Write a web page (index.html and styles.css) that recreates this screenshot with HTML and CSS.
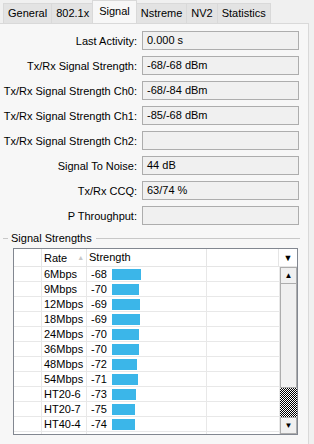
FILE: index.html
```html
<!DOCTYPE html>
<html lang="en">
<head>
    <meta charset="UTF-8">
    <title>Interface - Signal</title>
    <link rel="stylesheet" href="styles.css">
</head>
<body>
    <div class="tabs">
        <div class="tab">General</div>
        <div class="tab">802.1x</div>
        <div class="tab active">Signal</div>
        <div class="tab">Nstreme</div>
        <div class="tab">NV2</div>
        <div class="tab">Statistics</div>
    </div>
    <div class="panel">
        <div class="form">
            <label>Last Activity:</label><div class="field">0.000 s</div>
            <label>Tx/Rx Signal Strength:</label><div class="field">-68/-68 dBm</div>
            <label>Tx/Rx Signal Strength Ch0:</label><div class="field">-68/-84 dBm</div>
            <label>Tx/Rx Signal Strength Ch1:</label><div class="field">-85/-68 dBm</div>
            <label>Tx/Rx Signal Strength Ch2:</label><div class="field"></div>
            <label>Signal To Noise:</label><div class="field">44 dB</div>
            <label>Tx/Rx CCQ:</label><div class="field">63/74 %</div>
            <label>P Throughput:</label><div class="field"></div>
        </div>
        <div class="group"><span>Signal Strengths</span></div>
        <div class="list">
            <div class="list-head">
                <div class="col c0"></div>
                <div class="col c1">Rate <span class="sort">&#9650;</span></div>
                <div class="col c2">Strength</div>
                <div class="col c3"></div>
                <div class="col c4"><span class="drop">&#9660;</span></div>
            </div>
            <div class="list-body">
                <div class="rows">
                    <div class="row"><div class="c0"></div><div class="c1">6Mbps</div><div class="c2"><span class="val">-68</span><span class="bar" style="width:29px"></span></div></div>
                    <div class="row"><div class="c0"></div><div class="c1">9Mbps</div><div class="c2"><span class="val">-70</span><span class="bar" style="width:27px"></span></div></div>
                    <div class="row"><div class="c0"></div><div class="c1">12Mbps</div><div class="c2"><span class="val">-69</span><span class="bar" style="width:28px"></span></div></div>
                    <div class="row"><div class="c0"></div><div class="c1">18Mbps</div><div class="c2"><span class="val">-69</span><span class="bar" style="width:28px"></span></div></div>
                    <div class="row"><div class="c0"></div><div class="c1">24Mbps</div><div class="c2"><span class="val">-70</span><span class="bar" style="width:27px"></span></div></div>
                    <div class="row"><div class="c0"></div><div class="c1">36Mbps</div><div class="c2"><span class="val">-70</span><span class="bar" style="width:27px"></span></div></div>
                    <div class="row"><div class="c0"></div><div class="c1">48Mbps</div><div class="c2"><span class="val">-72</span><span class="bar" style="width:25px"></span></div></div>
                    <div class="row"><div class="c0"></div><div class="c1">54Mbps</div><div class="c2"><span class="val">-71</span><span class="bar" style="width:26px"></span></div></div>
                    <div class="row"><div class="c0"></div><div class="c1">HT20-6</div><div class="c2"><span class="val">-73</span><span class="bar" style="width:24px"></span></div></div>
                    <div class="row"><div class="c0"></div><div class="c1">HT20-7</div><div class="c2"><span class="val">-75</span><span class="bar" style="width:23px"></span></div></div>
                    <div class="row"><div class="c0"></div><div class="c1">HT40-4</div><div class="c2"><span class="val">-74</span><span class="bar" style="width:23px"></span></div></div>
                    <div class="row"><div class="c0"></div><div class="c1">HT40-5</div><div class="c2"><span class="val">-73</span><span class="bar" style="width:24px"></span></div></div>
                </div>
                <div class="scrollbar">
                    <div class="sb-btn">&#9650;</div>
                    <div class="sb-thumb"></div>
                    <div class="sb-track"></div>
                    <div class="sb-btn">&#9660;</div>
                </div>
            </div>
        </div>
    </div>
</body>
</html>
```

FILE: styles.css
```css
body { margin: 0; background: #f0f0f0; font-family: "Liberation Sans", Arial, sans-serif; font-size: 11px; color: #000; width: 314px; height: 444px; overflow: hidden; }
.tabs { display: flex; height: 23px; padding-left: 3px; align-items: flex-end; }
.tab { height: 19px; line-height: 19px; padding: 0 4px; background: #e3e3e3; border: 1px solid #d9d9d9; border-bottom: none; margin-right: -1px; }
.tab.active { height: 22px; line-height: 21px; background: #f7f7f7; border-color: #d9d9d9; position: relative; z-index: 1; margin: 0 -1px 0 -1px; padding: 0 6px; }
.panel { margin-right: 5px; height: 420px; border: 1px solid #d9d9d9; border-left: none; background: #f7f7f7; }
.form { display: grid; grid-template-columns: 137px 157px; column-gap: 5px; row-gap: 6px; padding-top: 7px; align-items: center; }
.form label { text-align: right; white-space: nowrap; }
.field { height: 17px; line-height: 17px; border: 1px solid #adadad; background: #f0f0f0; padding-left: 4px; }
.group { display: flex; align-items: center; margin: 6px 8px 0 3px; height: 14px; }
.group::before { content: ""; width: 5px; border-top: 1px solid #c8c8c8; margin-right: 3px; }
.group::after { content: ""; flex: 1; border-top: 1px solid #c8c8c8; margin-left: 4px; }
.list { margin: 3px 0 0 13px; width: 283px; height: 185px; border: 1px solid #828790; background: #fff; overflow: hidden; }
.list-head { display: flex; height: 17px; border-bottom: 1px solid #e5e5e5; }
.list-head .col { border-right: 1px solid #e5e5e5; line-height: 17px; padding-left: 2px; box-sizing: border-box; white-space: nowrap; }
.c0 { width: 28px; }
.c1 { width: 45px; }
.c2 { width: 120px; }
.c3 { width: 72px; }
.list-head .c4 { width: 18px; border-right: none; padding: 0; text-align: center; }
.sort { color: #c8c8c8; font-size: 7px; vertical-align: 2px; margin-left: 7px; }
.drop { font-size: 9px; }
.list-body { display: flex; }
.rows { width: 265px; }
.row { display: flex; height: 14px; line-height: 14px; border-bottom: 1px solid #e8e8e8; position: relative; }
.row > div { border-right: 1px solid #e8e8e8; box-sizing: border-box; padding-left: 2px; white-space: nowrap; }
.row .c0 { width: 28px; }
.row .c1 { width: 45px; }
.row .c2 { flex: 1; border-right: none; display: flex; align-items: center; padding-left: 4px; }
.row::after { content: ""; position: absolute; left: 192px; top: 0; bottom: 0; border-left: 1px solid #e8e8e8; }
.val { width: 21px; }
.bar { height: 11px; background: #3bb6e9; }
.scrollbar { width: 17px; height: 167px; display: flex; flex-direction: column; background: #f0f0f0; border-left: 1px solid #e8e8e8; }
.sb-btn { height: 15px; line-height: 15px; text-align: center; font-size: 8px; border: 1px solid #adadad; background: #f0f0f0; }
.sb-thumb { height: 103px; border: 1px solid #adadad; border-top: none; background: #f0f0f0; }
.sb-track { flex: 1; background: repeating-conic-gradient(#000 0 25%, #fff 0 50%) 0 0 / 2px 2px; }
```
